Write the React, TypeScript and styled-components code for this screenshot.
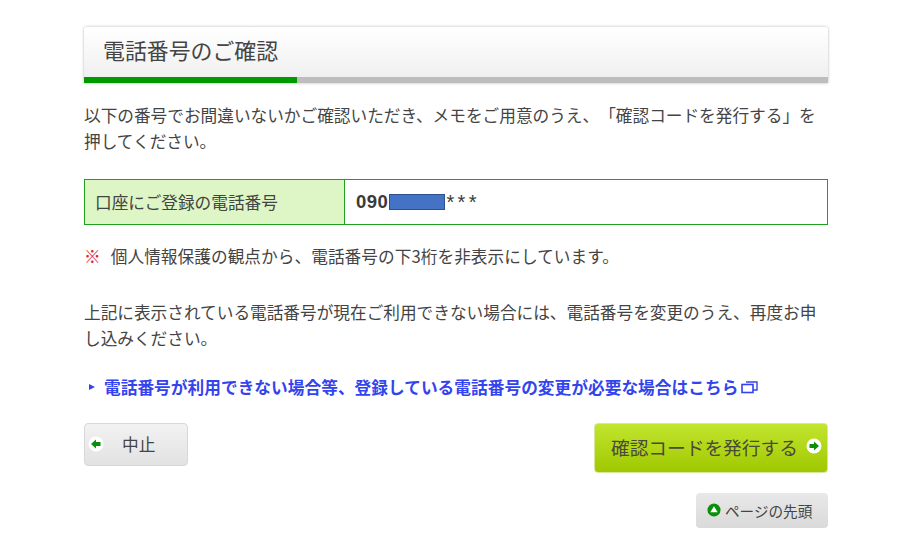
import React from "react";
import styled, { createGlobalStyle } from "styled-components";

const Global = createGlobalStyle`
  html, body { margin: 0; padding: 0; background: #fff; }
  body {
    font-family: "Noto Sans CJK JP", "Noto Sans", sans-serif;
    color: #3f3f3f;
    text-spacing-trim: space-all;
  }
`;

const Page = styled.main`
  width: 744px;
  margin-left: 84px;
  padding-top: 27px;
  display: flex;
  flex-direction: column;
`;

const Header = styled.header`
  height: 56px;
  box-sizing: border-box;
  display: flex;
  flex-direction: column;
  border-radius: 3px 3px 0 0;
  box-shadow: 0 0 3px rgba(0, 0, 0, 0.3);
  background: linear-gradient(#ffffff, #eeeeee);
`;

const Title = styled.h1`
  flex: 1;
  margin: 0;
  padding: 0 0 6px 19px;
  display: flex;
  align-items: center;
  font-size: 21.9px;
  font-weight: 400;
  color: #444;
`;

const Progress = styled.div`
  height: 6px;
  background: #bdbdbd;
`;

const ProgressFill = styled.div`
  height: 100%;
  width: 213px;
  background: #009a00;
`;

const Para = styled.p<{ $top: number }>`
  margin: ${(p) => p.$top}px 0 0;
  font-size: 16.66px;
  line-height: 26px;
  color: #444;
`;

const InfoTable = styled.div`
  margin-top: 25px;
  height: 46px;
  box-sizing: border-box;
  display: grid;
  grid-template-columns: 260px 1fr;
  border: 1px solid #1fa01f;
`;

const InfoLabel = styled.div`
  display: flex;
  align-items: center;
  padding: 0 0 1px 10px;
  background: #def6c5;
  border-right: 1px solid #1fa01f;
  font-size: 16.66px;
  color: #444;
`;

const InfoValue = styled.div`
  display: flex;
  align-items: center;
  padding-left: 11px;
  font-family: "Liberation Sans", sans-serif;
  font-size: 18.5px;
  color: #3a3a3a;
`;

const Strong = styled.strong`
  font-weight: 700;
  letter-spacing: 0.5px;
`;

const Mask = styled.span`
  width: 56px;
  height: 16px;
  margin: 0 0 1px 1px;
  box-sizing: border-box;
  background: #4472c4;
  border: 1px solid #2f528f;
`;

const Stars = styled.span`
  margin-left: 1px;
  font-size: 20px;
  letter-spacing: 3.4px;
`;

const Note = styled.p`
  margin: 18px 0 0;
  display: flex;
  gap: 10px;
  font-size: 16.66px;
  letter-spacing: 0.05px;
  line-height: 26px;
  color: #444;
`;

const Mark = styled.span`
  color: #e2231a;
`;

const LinkRow = styled.a`
  margin-top: 23px;
  display: flex;
  align-items: center;
  height: 26px;
  color: #3344ee;
  font-size: 16.66px;
  letter-spacing: 0.05px;
  font-weight: 700;
  text-decoration: none;
`;

const Bullet = styled.svg`
  width: 6px;
  height: 6px;
  margin: 0 9px 0 5px;
  flex: none;
`;

const External = styled.svg`
  width: 17px;
  height: 14px;
  margin-left: 3px;
  flex: none;
`;

const Actions = styled.div`
  margin-top: 23px;
  display: flex;
  justify-content: space-between;
  align-items: flex-start;
`;

const BackButton = styled.button`
  width: 104px;
  height: 43px;
  padding: 0 0 2px 3px;
  display: flex;
  align-items: center;
  border: 1px solid #d8d8d8;
  border-radius: 4px;
  background: linear-gradient(#f2f2f2, #e2e2e2);
  font: inherit;
  font-size: 16.66px;
  color: #444;
`;

const BackLabel = styled.span`
  margin-left: 18px;
`;

const NextButton = styled.button`
  width: 234px;
  height: 50px;
  padding: 0 5px 4px 16px;
  display: flex;
  align-items: center;
  justify-content: space-between;
  border: 1px solid #d6e69a;
  border-radius: 4px;
  background: linear-gradient(#c2e52f, #a0c800);
  font: inherit;
  font-size: 18.7px;
  color: #4a4a3a;
`;

const TopRow = styled.div`
  margin-top: 20px;
  display: flex;
  justify-content: flex-end;
`;

const TopButton = styled.button`
  width: 132px;
  height: 35px;
  padding: 0 0 1px 11px;
  display: flex;
  align-items: center;
  gap: 4px;
  border: none;
  border-radius: 4px;
  background: linear-gradient(#e8e8e8, #dadada);
  font: inherit;
  font-size: 14.6px;
  color: #444;
`;

const Arrow = ({ dir }: { dir: "left" | "right" }) => (
  <svg width="16" height="16" viewBox="0 0 16 16" style={{ flex: "none" }}>
    <circle cx="8" cy="8" r="7.5" fill="#fff" />
    <path
      d={dir === "left" ? "M3 8 8 3.5V6h4.5v4H8v2.5Z" : "M13 8 8 3.5V6H3.5v4H8v2.5Z"}
      fill="#0a8f0a"
    />
  </svg>
);

export default function App() {
  return (
    <>
      <Global />
      <Page>
        <Header>
          <Title>電話番号のご確認</Title>
          <Progress>
            <ProgressFill />
          </Progress>
        </Header>

        <Para $top={19}>
          以下の番号でお間違いないかご確認いただき、メモをご用意のうえ、「確認コードを発行する」を押してください。
        </Para>

        <InfoTable>
          <InfoLabel>口座にご登録の電話番号</InfoLabel>
          <InfoValue>
            <Strong>090</Strong>
            <Mask />
            <Stars>***</Stars>
          </InfoValue>
        </InfoTable>

        <Note>
          <Mark>※</Mark>
          <span>個人情報保護の観点から、電話番号の下3桁を非表示にしています。</span>
        </Note>

        <Para $top={30}>
          上記に表示されている電話番号が現在ご利用できない場合には、電話番号を変更のうえ、再度お申し込みください。
        </Para>

        <LinkRow href="#">
          <Bullet viewBox="0 0 6 6">
            <path d="M0 0 6 3 0 6Z" fill="#3344ee" />
          </Bullet>
          電話番号が利用できない場合等、登録している電話番号の変更が必要な場合はこちら
          <External viewBox="0 0 17 14" fill="none" stroke="#3344ee">
            <rect x="1" y="4.5" width="11" height="8" strokeWidth="1.6" />
            <path d="M5 2h11v8h-4" strokeWidth="1.4" />
          </External>
        </LinkRow>

        <Actions>
          <BackButton>
            <Arrow dir="left" />
            <BackLabel>中止</BackLabel>
          </BackButton>
          <NextButton>
            確認コードを発行する
            <Arrow dir="right" />
          </NextButton>
        </Actions>

        <TopRow>
          <TopButton>
            <svg width="14" height="14" viewBox="0 0 15 15" style={{ flex: "none" }}>
              <circle cx="7.5" cy="7.5" r="7" fill="#0a8f0a" />
              <path d="M7.5 3.5 11.5 10h-8Z" fill="#fff" />
            </svg>
            ページの先頭
          </TopButton>
        </TopRow>
      </Page>
    </>
  );
}
